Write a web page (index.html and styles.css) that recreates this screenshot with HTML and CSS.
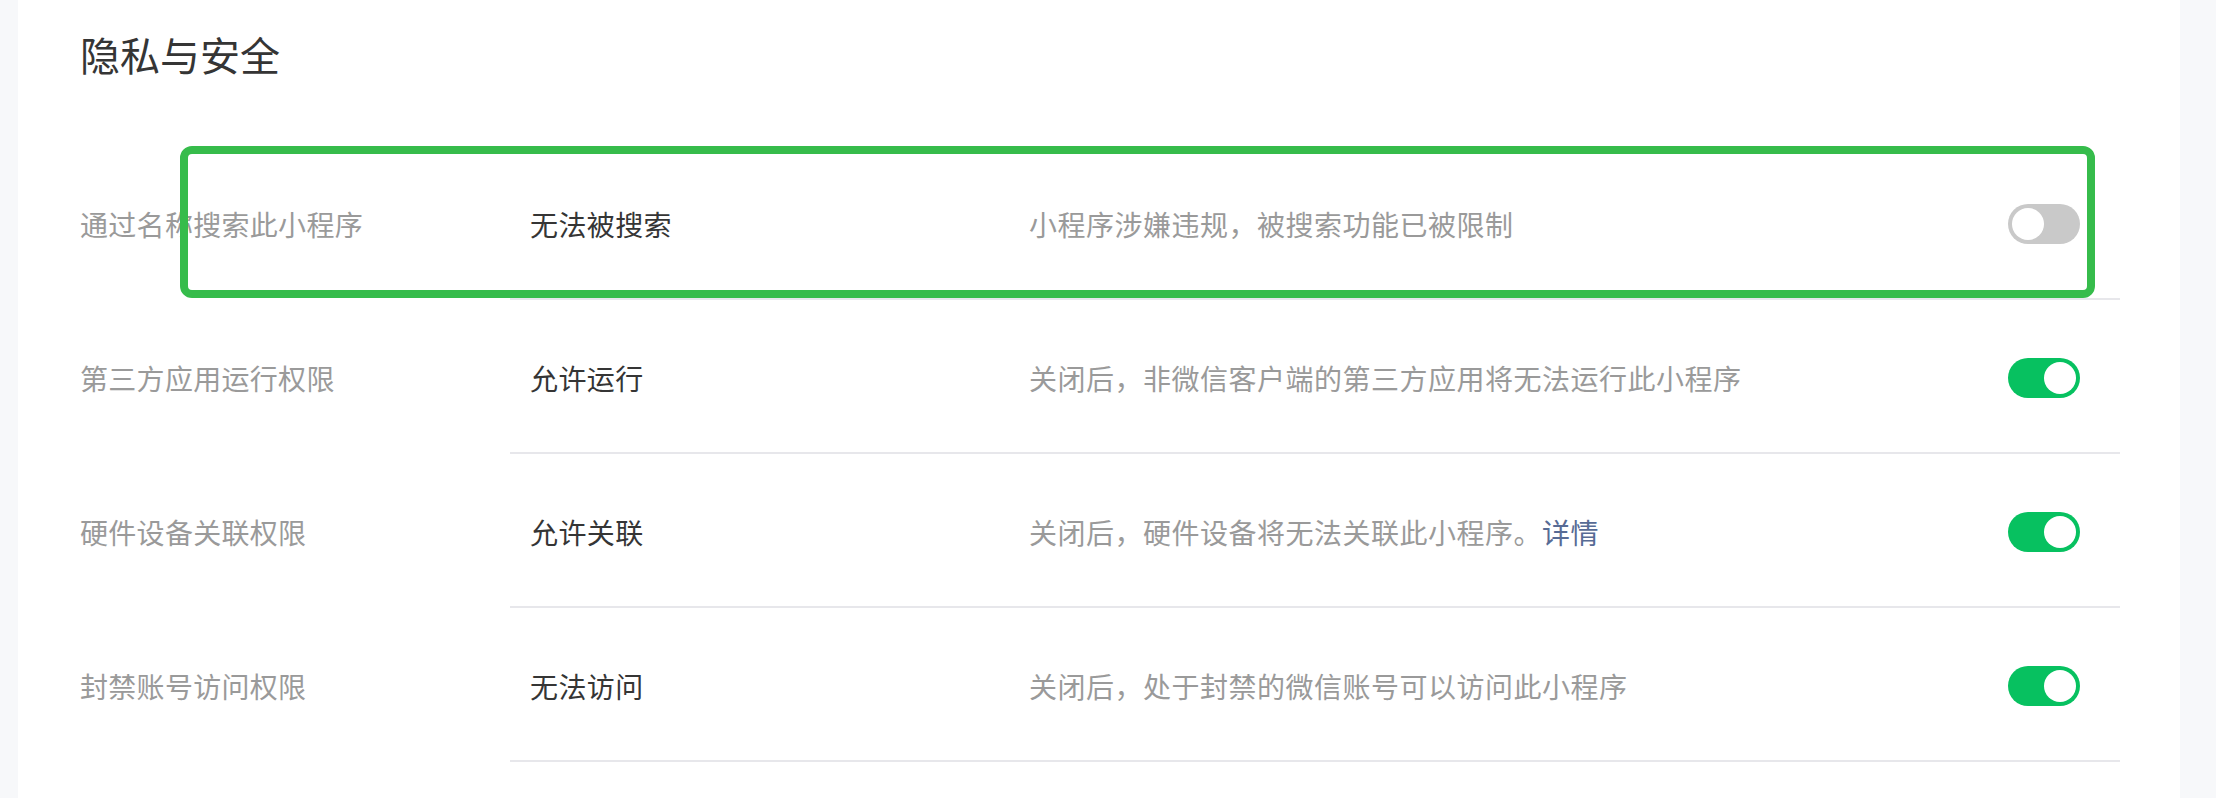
FILE: index.html
```html
<!DOCTYPE html>
<html lang="zh-CN">
<head>
<meta charset="utf-8">
<title>隐私与安全</title>
<link rel="stylesheet" href="styles.css">
</head>
<body>
<div class="page">
  <section class="card">
    <h1 class="title">隐私与安全</h1>
    <div class="rows">
      <div class="row">
        <div class="row-label">通过名称搜索此小程序</div>
        <div class="row-main">
          <div class="row-value">无法被搜索</div>
          <div class="row-desc">小程序涉嫌违规，被搜索功能已被限制</div>
          <span class="switch switch-off"><span class="knob"></span></span>
        </div>
      </div>
      <div class="row">
        <div class="row-label">第三方应用运行权限</div>
        <div class="row-main">
          <div class="row-value">允许运行</div>
          <div class="row-desc">关闭后，非微信客户端的第三方应用将无法运行此小程序</div>
          <span class="switch switch-on"><span class="knob"></span></span>
        </div>
      </div>
      <div class="row">
        <div class="row-label">硬件设备关联权限</div>
        <div class="row-main">
          <div class="row-value">允许关联</div>
          <div class="row-desc">关闭后，硬件设备将无法关联此小程序。<a class="link" href="#">详情</a></div>
          <span class="switch switch-on"><span class="knob"></span></span>
        </div>
      </div>
      <div class="row">
        <div class="row-label">封禁账号访问权限</div>
        <div class="row-main">
          <div class="row-value">无法访问</div>
          <div class="row-desc">关闭后，处于封禁的微信账号可以访问此小程序</div>
          <span class="switch switch-on"><span class="knob"></span></span>
        </div>
      </div>
    </div>
    <div class="highlight"></div>
  </section>
  <div class="watermark" aria-hidden="true">
    <span>Sg6rVKeel79</span><span>Sg6rVKeel79</span><span>Sg6rVKeel79</span><span>Sg6rVKeel79</span><span>Sg6rVKeel79</span><span>Sg6rVKeel79</span>
    <span>Sg6rVKeel79</span><span>Sg6rVKeel79</span><span>Sg6rVKeel79</span><span>Sg6rVKeel79</span><span>Sg6rVKeel79</span><span>Sg6rVKeel79</span>
    <span>Sg6rVKeel79</span><span>Sg6rVKeel79</span><span>Sg6rVKeel79</span><span>Sg6rVKeel79</span><span>Sg6rVKeel79</span><span>Sg6rVKeel79</span>
    <span>Sg6rVKeel79</span><span>Sg6rVKeel79</span><span>Sg6rVKeel79</span><span>Sg6rVKeel79</span><span>Sg6rVKeel79</span><span>Sg6rVKeel79</span>
    <span>Sg6rVKeel79</span><span>Sg6rVKeel79</span><span>Sg6rVKeel79</span><span>Sg6rVKeel79</span><span>Sg6rVKeel79</span><span>Sg6rVKeel79</span>
    <span>Sg6rVKeel79</span><span>Sg6rVKeel79</span><span>Sg6rVKeel79</span><span>Sg6rVKeel79</span><span>Sg6rVKeel79</span><span>Sg6rVKeel79</span>
    <span>Sg6rVKeel79</span><span>Sg6rVKeel79</span><span>Sg6rVKeel79</span><span>Sg6rVKeel79</span><span>Sg6rVKeel79</span><span>Sg6rVKeel79</span>
    <span>Sg6rVKeel79</span><span>Sg6rVKeel79</span><span>Sg6rVKeel79</span><span>Sg6rVKeel79</span><span>Sg6rVKeel79</span><span>Sg6rVKeel79</span>
    <span>Sg6rVKeel79</span><span>Sg6rVKeel79</span><span>Sg6rVKeel79</span><span>Sg6rVKeel79</span><span>Sg6rVKeel79</span><span>Sg6rVKeel79</span>
  </div>
</div>
</body>
</html>
```
FILE: styles.css
```css
* {
  box-sizing: border-box;
}

html, body {
  margin: 0;
  padding: 0;
}

body {
  background: #f7f8fa;
  font-family: "Noto Sans CJK SC", "Noto Sans", "Liberation Sans", sans-serif;
  overflow: hidden;
}

.page {
  position: relative;
  width: 2216px;
  height: 798px;
  overflow: hidden;
}

.card {
  position: relative;
  margin-left: 18px;
  width: 2162px;
  height: 798px;
  background: #ffffff;
  padding: 26px 60px 0 62px;
}

.title {
  margin: 0 0 64px 0;
  height: 56px;
  line-height: 56px;
  font-size: 40px;
  font-weight: 400;
  color: #353535;
}

.rows {
  display: flex;
  flex-direction: column;
}

.row {
  display: flex;
  height: 154px;
}

.row-label {
  flex: none;
  width: 430px;
  display: flex;
  align-items: center;
  padding-top: 3px;
  padding-bottom: 2px;
  font-size: 28px;
  letter-spacing: 0.3px;
  color: #9a9a9a;
}

.row-main {
  flex: 1;
  display: flex;
  align-items: center;
  padding: 3px 40px 0 20px;
  border-bottom: 2px solid #e7e7eb;
}

.row-value {
  flex: none;
  width: 499px;
  font-size: 28px;
  letter-spacing: 0.4px;
  color: #353535;
}

.row-desc {
  flex: 1;
  font-size: 28px;
  letter-spacing: 0.5px;
  color: #9a9a9a;
}

.link {
  color: #576b95;
  text-decoration: none;
}

.switch {
  flex: none;
  position: relative;
  width: 72px;
  height: 40px;
  border-radius: 20px;
  display: flex;
  align-items: center;
  padding: 0 4px;
}

.switch-on {
  background: #07c160;
  justify-content: flex-end;
}

.switch-off {
  background: #c9c9c9;
  justify-content: flex-start;
}

.knob {
  display: block;
  width: 32px;
  height: 32px;
  border-radius: 50%;
  background: #ffffff;
}

.highlight {
  position: absolute;
  left: 162px;
  top: 146px;
  width: 1915px;
  height: 152px;
  border: 8px solid #36bc4b;
  border-radius: 12px;
  pointer-events: none;
}

.watermark {
  position: absolute;
  left: -87px;
  top: 15px;
  display: grid;
  grid-template-columns: repeat(6, 431px);
  grid-auto-rows: 91.5px;
  pointer-events: none;
  font-family: "Liberation Sans", Arial, sans-serif;
  font-size: 27px;
  line-height: 27px;
  color: rgba(0, 0, 0, 0.025);
  white-space: nowrap;
}
```
